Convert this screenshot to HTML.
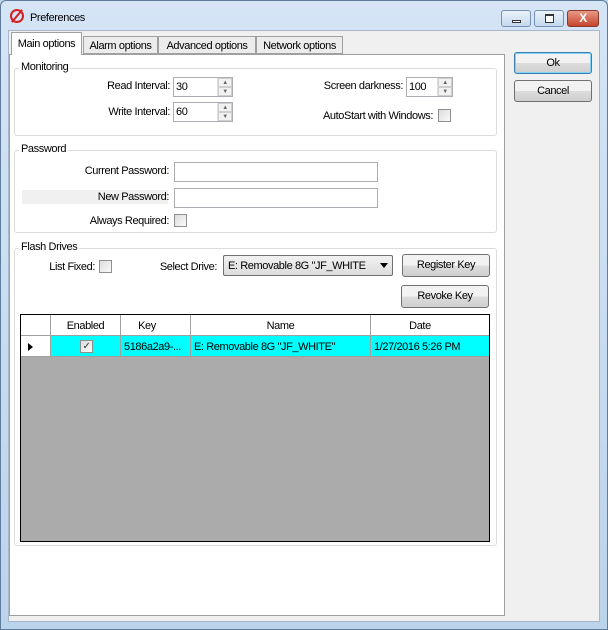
<!DOCTYPE html>
<html><head><style>
*{box-sizing:border-box}
body{margin:0;width:608px;height:630px;overflow:hidden;font-family:"Liberation Sans",sans-serif;font-size:11px;letter-spacing:-0.4px;color:#000;background:#c2d7ee}
.a{position:absolute}
.win{position:absolute;left:0;top:0;width:608px;height:630px;background:linear-gradient(#d5e5f6,#bcd3ec);border:1px solid #5f7c9c;border-radius:6px 6px 0 0}
.client{left:8px;top:30px;width:592px;height:592px;background:#f0f0f0;border:1px solid #a6b7cc}
.page{left:9px;top:54px;width:496px;height:562px;background:#fff;border:1px solid #a0a0a0}
.tab{position:absolute;top:36px;height:18px;border:1px solid #a0a0a0;background:#ececec;padding:3px 4px 0;white-space:nowrap;text-align:center}
.grp{position:absolute;border:1px solid #dcdcdc;border-radius:3px}
.gl{position:absolute;background:#fff;padding:0 2px}
.lbl{position:absolute;text-align:right;white-space:nowrap}
.tb{position:absolute;height:20px;border:1px solid #abadb3;background:#fff;padding:3px 2px}
.sp{position:absolute;width:15px;height:18px;border-left:1px solid #ddd}
.sp div{height:9px;font-size:6px;color:#666;text-align:center;line-height:9px;background:#f2f2f2;border:1px solid #cfcfcf}
.cb{position:absolute;width:13px;height:13px;border:1px solid #8e8f8f;background:linear-gradient(135deg,#dcdcdc,#fafafa)}
.btn{position:absolute;border:1px solid #707070;border-radius:3px;background:linear-gradient(#f2f2f2 50%,#dddddd 50%,#cfcfcf);text-align:center}
</style></head><body>
<div class="win"></div>
<div class="a" style="left:10px;top:9px;width:14px;height:14px;border:2px solid #d42020;border-radius:50%"></div>
<div class="a" style="left:16px;top:8px;width:2px;height:16px;background:#d42020;transform:rotate(40deg)"></div>
<div class="a" style="left:30px;top:12px">Preferences</div>
<div class="a" style="left:501px;top:10px;width:30px;height:17px;border:1px solid #7590b0;border-radius:3px;background:linear-gradient(#eaf2fb,#c6d8ee)"><div class="a" style="left:10px;top:9px;width:9px;height:3px;border:1px solid #333;background:#fff"></div></div>
<div class="a" style="left:534px;top:10px;width:30px;height:17px;border:1px solid #7590b0;border-radius:3px;background:linear-gradient(#eaf2fb,#c6d8ee)"><div class="a" style="left:10px;top:3px;width:9px;height:9px;border:1px solid #333;border-top-width:2px;background:#fff"></div></div>
<div class="a" style="left:567px;top:10px;width:32px;height:17px;border:1px solid #8a3a2a;border-radius:3px;background:linear-gradient(#e89a86,#c5432c);color:#fff;font-weight:bold;text-align:center;line-height:15px;font-size:12px">X</div>
<div class="a client"></div>
<div class="a page"></div>
<div class="tab" style="left:11px;top:32px;height:23px;background:#fff;border-bottom:none;padding-top:5px;width:71px">Main options</div>
<div class="tab" style="left:83px;width:75px">Alarm options</div>
<div class="tab" style="left:158px;width:98px">Advanced options</div>
<div class="tab" style="left:256px;width:87px">Network options</div>

<div class="grp" style="left:14px;top:68px;width:483px;height:68px"></div>
<div class="gl" style="left:19px;top:61px">Monitoring</div>
<div class="lbl" style="left:60px;top:80px;width:110px">Read Interval:</div>
<div class="tb" style="left:173px;top:77px;width:60px">30</div><div class="sp" style="left:217px;top:78px"><div>▲</div><div>▼</div></div>
<div class="lbl" style="left:60px;top:106px;width:110px">Write Interval:</div>
<div class="tb" style="left:173px;top:102px;width:60px">60</div><div class="sp" style="left:217px;top:103px"><div>▲</div><div>▼</div></div>
<div class="lbl" style="left:280px;top:80px;width:123px">Screen darkness:</div>
<div class="tb" style="left:406px;top:77px;width:47px">100</div><div class="sp" style="left:437px;top:78px"><div>▲</div><div>▼</div></div>
<div class="lbl" style="left:280px;top:110px;width:153px">AutoStart with Windows:</div>
<div class="cb" style="left:438px;top:109px"></div>

<div class="grp" style="left:14px;top:150px;width:483px;height:83px"></div>
<div class="gl" style="left:19px;top:143px">Password</div>
<div class="lbl" style="left:40px;top:165px;width:129px">Current Password:</div>
<div class="tb" style="left:174px;top:162px;width:204px"></div>
<div class="a" style="left:22px;top:190px;width:146px;height:14px;background:#f0f0f0"></div>
<div class="lbl" style="left:40px;top:191px;width:129px">New Password:</div>
<div class="tb" style="left:174px;top:188px;width:204px"></div>
<div class="lbl" style="left:40px;top:215px;width:129px">Always Required:</div>
<div class="cb" style="left:174px;top:214px"></div>

<div class="grp" style="left:14px;top:248px;width:483px;height:298px"></div>
<div class="gl" style="left:19px;top:241px">Flash Drives</div>
<div class="lbl" style="left:30px;top:261px;width:65px">List Fixed:</div>
<div class="cb" style="left:99px;top:260px"></div>
<div class="lbl" style="left:140px;top:261px;width:77px">Select Drive:</div>
<div class="a" style="left:223px;top:255px;width:170px;height:21px;border:1px solid #707070;border-radius:2px;background:linear-gradient(#f2f2f2,#dcdcdc);padding:4px 4px;white-space:nowrap;overflow:hidden">E: Removable 8G "JF_WHITE</div>
<div class="a" style="left:380px;top:263px;width:0;height:0;border-left:4px solid transparent;border-right:4px solid transparent;border-top:5px solid #000"></div>
<div class="btn" style="left:402px;top:254px;width:88px;height:23px;line-height:21px">Register Key</div>
<div class="btn" style="left:401px;top:285px;width:88px;height:23px;line-height:21px">Revoke Key</div>

<div class="a" style="left:20px;top:314px;width:470px;height:228px;background:#ababab;border:1px solid #000"></div>
<div class="a" style="left:21px;top:315px;width:468px;height:21px;background:#fff;border-bottom:1px solid #a0a0a0"></div>
<div class="a" style="left:50px;top:315px;width:1px;height:42px;background:#a0a0a0"></div>
<div class="a" style="left:120px;top:315px;width:1px;height:42px;background:#a0a0a0"></div>
<div class="a" style="left:190px;top:315px;width:1px;height:42px;background:#a0a0a0"></div>
<div class="a" style="left:370px;top:315px;width:1px;height:42px;background:#a0a0a0"></div>
<div class="a" style="left:51px;top:320px;width:69px;text-align:center">Enabled</div>
<div class="a" style="left:121px;top:320px;width:52px;text-align:center">Key</div>
<div class="a" style="left:191px;top:320px;width:179px;text-align:center">Name</div>
<div class="a" style="left:371px;top:320px;width:98px;text-align:center">Date</div>
<div class="a" style="left:21px;top:336px;width:29px;height:21px;background:#fff;border-bottom:1px solid #a0a0a0"></div>
<div class="a" style="left:28px;top:343px;width:0;height:0;border-top:4px solid transparent;border-bottom:4px solid transparent;border-left:5px solid #000"></div>
<div class="a" style="left:51px;top:336px;width:438px;height:21px;background:#00ffff;border-bottom:1px solid #a0a0a0"></div>
<div class="a" style="left:50px;top:336px;width:1px;height:21px;background:#a0a0a0"></div>
<div class="a" style="left:120px;top:336px;width:1px;height:21px;background:#a0a0a0"></div>
<div class="a" style="left:190px;top:336px;width:1px;height:21px;background:#a0a0a0"></div>
<div class="a" style="left:370px;top:336px;width:1px;height:21px;background:#a0a0a0"></div>
<div class="cb" style="left:80px;top:340px;font-size:10px;line-height:11px;text-align:center;color:#333">✓</div>
<div class="a" style="left:124px;top:341px">5186a2a9-...</div>
<div class="a" style="left:194px;top:341px">E: Removable 8G "JF_WHITE"</div>
<div class="a" style="left:374px;top:341px">1/27/2016 5:26 PM</div>

<div class="btn" style="left:514px;top:52px;width:78px;height:22px;line-height:20px;border-color:#3c7fb1;box-shadow:inset 0 0 0 1px #7fd3f7">Ok</div>
<div class="btn" style="left:514px;top:80px;width:78px;height:22px;line-height:20px">Cancel</div>
</body></html>
